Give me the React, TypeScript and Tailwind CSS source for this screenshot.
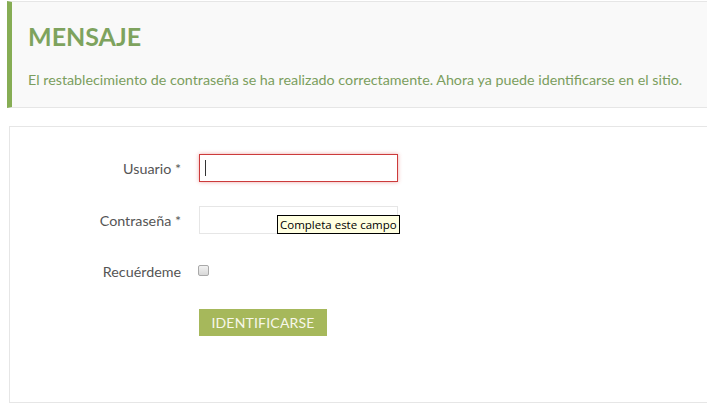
export default function App() {
  return (
    <div className="w-[707px] h-[419px] overflow-hidden bg-white font-['Lato','Open_Sans',sans-serif]">
      <div className="mt-px ml-[7px] w-[720px] h-[107px] bg-[#f9f9f9] border-t border-b border-[#e6e6e6] border-l-[5px] border-l-[#86ad54] pl-[16px]">
        <h1 className="pt-[19px] text-[25px] leading-[30px] font-bold text-[#7ea35e]">MENSAJE</h1>
        <p className="mt-[21px] text-[14.3px] leading-[16px] text-[#7b9e5e]">
          El restablecimiento de contraseña se ha realizado correctamente. Ahora ya puede identificarse en el sitio.
        </p>
      </div>

      <div className="mt-[18px] ml-[9px] w-[720px] h-[277px] border border-[#e6e6e6] pt-[27px]">
        <div className="grid grid-cols-[171px_auto] gap-x-[18px] items-start">
          <label className="text-right text-[14.3px] leading-[30px] text-[#555]">Usuario *</label>
          <div className="relative w-[199px] h-[28px] border border-[#cc3b3b] shadow-[0_0_4px_rgba(220,60,60,0.45)] bg-white">
            <span className="absolute left-[5px] top-[5px] w-px h-[16px] bg-[#333]" />
          </div>

          <label className="mt-[22px] text-right text-[14.3px] leading-[30px] text-[#555]">Contraseña *</label>
          <div className="relative mt-[22px] w-[199px] h-[28px] border border-[#e6e6e6] bg-white">
            <div className="absolute left-[77px] top-[8px] h-[19px] px-[2px] border border-black bg-[#ffffe1] text-[11.5px] leading-[17px] text-black font-['Open_Sans','Noto_Sans',sans-serif] whitespace-nowrap">
              Completa este campo
            </div>
          </div>

          <label className="mt-[26px] text-right text-[14.3px] leading-[20px] text-[#555]">Recuérdeme</label>
          <div className="mt-[26px] h-[20px] pt-[3px] -ml-[1px]">
            <span className="block w-[11px] h-[11px] rounded-[2px] border border-[#a9a9a9] bg-gradient-to-b from-[#f2f2f2] to-[#d8d8d8]" />
          </div>

          <div />
          <button className="mt-[27px] w-[128px] h-[27px] bg-[#a6b85b] text-[14px] text-[#f7f7ea] uppercase tracking-[0.2px] text-center">
            Identificarse
          </button>
        </div>
      </div>
    </div>
  );
}
